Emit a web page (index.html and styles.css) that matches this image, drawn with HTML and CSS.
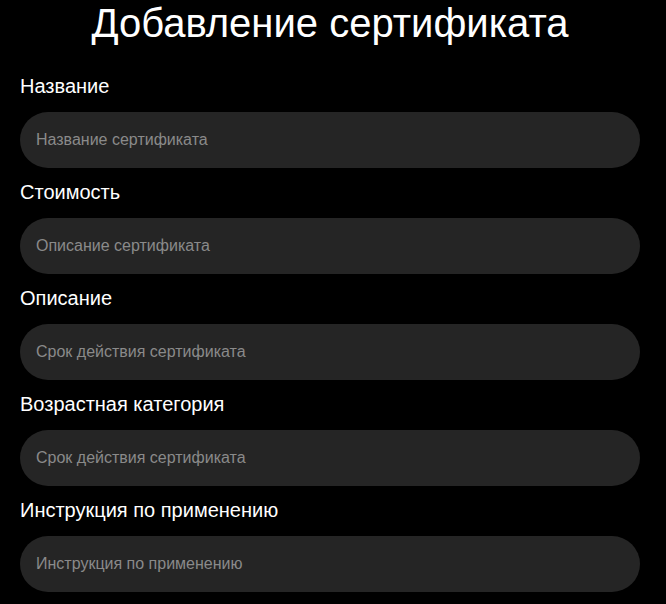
FILE: index.html
```html
<!DOCTYPE html>
<html lang="ru">
<head>
<meta charset="utf-8">
<title>Добавление сертификата</title>
<link rel="stylesheet" href="styles.css">
</head>
<body>
<main class="page">
  <h1 class="title">Добавление сертификата</h1>
  <form class="form">
    <div class="field">
      <label class="label" for="f1">Название</label>
      <input class="input" id="f1" type="text" placeholder="Название сертификата">
    </div>
    <div class="field">
      <label class="label" for="f2">Стоимость</label>
      <input class="input" id="f2" type="text" placeholder="Описание сертификата">
    </div>
    <div class="field">
      <label class="label" for="f3">Описание</label>
      <input class="input" id="f3" type="text" placeholder="Срок действия сертификата">
    </div>
    <div class="field">
      <label class="label" for="f4">Возрастная категория</label>
      <input class="input" id="f4" type="text" placeholder="Срок действия сертификата">
    </div>
    <div class="field">
      <label class="label" for="f5">Инструкция по применению</label>
      <input class="input" id="f5" type="text" placeholder="Инструкция по применению">
    </div>
  </form>
</main>
</body>
</html>
```

FILE: styles.css
```css
html, body {
  margin: 0;
  padding: 0;
  background: #000;
}
body {
  font-family: "Liberation Sans", Arial, sans-serif;
  color: #fff;
}
.page {
  width: 620px;
  padding: 0 20px;
}
.title {
  margin: 0 0 16px;
  font-size: 40px;
  font-weight: 400;
  line-height: 46px;
  text-align: center;
}
.form {
  display: flex;
  flex-direction: column;
}
.field {
  display: flex;
  flex-direction: column;
  padding-top: 13px;
}
.label {
  font-size: 20px;
  line-height: 23px;
  margin-bottom: 14px;
}
.input {
  box-sizing: border-box;
  width: 620px;
  height: 56px;
  border: none;
  border-radius: 28px;
  background: #252525;
  padding: 0 16px;
  font-family: "Liberation Sans", Arial, sans-serif;
  font-size: 16px;
  color: #fff;
  outline: none;
}
.input::placeholder {
  color: #8a8a8a;
}
```
